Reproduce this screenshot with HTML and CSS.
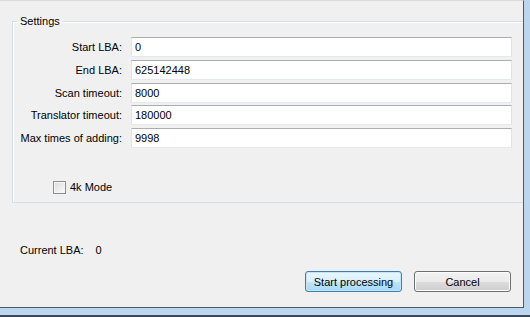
FILE: index.html
```html
<!DOCTYPE html>
<html lang="en">
<head>
  <meta charset="UTF-8" />
  <title>Settings</title>
  <link rel="stylesheet" href="styles.css">
</head>
<body>
  <div class="frame">
    <div class="dialog">
      <fieldset class="group">
        <legend>Settings</legend>
        <div class="fields">
          <label for="start">Start LBA:</label>
          <input id="start" type="text" value="0">
          <label for="end">End LBA:</label>
          <input id="end" type="text" value="625142448">
          <label for="scan">Scan timeout:</label>
          <input id="scan" type="text" value="8000">
          <label for="trans">Translator timeout:</label>
          <input id="trans" type="text" value="180000">
          <label for="max">Max times of adding:</label>
          <input id="max" type="text" value="9998">
        </div>
        <label class="check"><span class="box"></span>4k Mode</label>
      </fieldset>

      <div class="status">
        <span>Current LBA:</span>
        <span class="value">0</span>
      </div>

      <div class="buttons">
        <button class="btn default">Start processing</button>
        <button class="btn">Cancel</button>
      </div>
    </div>
  </div>
</body>
</html>
```

FILE: styles.css
```css
body {
  margin: 0;
  font-family: 'Liberation Sans', Arial, sans-serif;
  font-size: 11px;
  color: #000;
}

.frame {
  width: 530px;
  height: 317px;
  background: #bcd6f0;
  box-sizing: border-box;
  border-bottom: 2px solid #3a4a5a;
  overflow: hidden;
}

.dialog {
  width: 524px;
  height: 308px;
  background: #f0f0f0;
  border-right: 1px solid #4e5a66;
  border-bottom: 1px solid #4e5a66;
  border-top: 1px solid #dadada;
  box-sizing: border-box;
  overflow: hidden;
}

.group {
  width: 540px;
  margin: 13px 0 0 12px;
  padding: 8px 0 8px 0;
  box-sizing: border-box;
  border: 1px solid #d5dfe5;
  box-shadow: inset 1px 1px 0 #fff;
  min-width: 0;
}

.group legend {
  margin-left: 5px;
  padding: 0 2px;
  line-height: 15px;
}

.fields {
  display: grid;
  grid-template-columns: 109px 381px;
  column-gap: 9px;
  row-gap: 2.75px;
  align-items: center;
}

.fields label {
  text-align: right;
  white-space: nowrap;
}

.fields input {
  height: 20px;
  box-sizing: border-box;
  margin: 0;
  padding: 0 0 0 3px;
  font: inherit;
  color: #000;
  background: #fff;
  border: 1px solid #e2e3ea;
  border-top-color: #abadb3;
  border-bottom-color: #e3e9ef;
  outline: none;
}

.check {
  display: flex;
  align-items: center;
  gap: 4px;
  margin: 33px 0 0 40px;
  line-height: 13px;
}

.box {
  width: 11px;
  height: 11px;
  border: 1px solid #8f8f8f;
  background: linear-gradient(135deg, #dcdcdc, #fbfbfb);
  box-shadow: inset 0 0 0 1px #f4f4f4;
}

.status {
  display: flex;
  gap: 12px;
  margin: 41px 0 0 20px;
}

.buttons {
  display: flex;
  justify-content: flex-end;
  gap: 12px;
  margin: 15px 12px 0 0;
}

.btn {
  width: 97px;
  height: 21px;
  margin: 0;
  padding: 0;
  font: inherit;
  color: #000;
  border: 1px solid #707070;
  border-radius: 3px;
  background: linear-gradient(#f2f2f2 0%, #ebebeb 50%, #dddddd 51%, #cfcfcf 100%);
  box-shadow: inset 0 0 0 1px #fcfcfc;
}

.btn.default {
  border-color: #3c7fb1;
  background: linear-gradient(#eaf6fd 0%, #d9f0fc 50%, #bee6fd 51%, #a7d9f5 100%);
  box-shadow: inset 0 0 0 1px #c4e5f6;
}
```
